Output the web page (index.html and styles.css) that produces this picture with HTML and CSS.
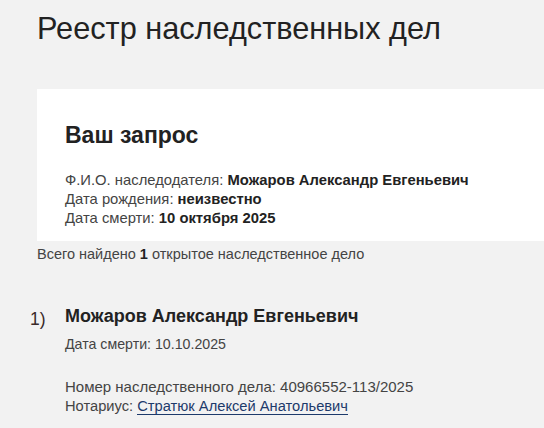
FILE: index.html
```html
<!DOCTYPE html>
<html lang="ru">
<head>
<meta charset="utf-8">
<link rel="stylesheet" href="styles.css">
</head>
<body>
<div class="page">
  <h1 class="title">Реестр наследственных дел</h1>
  <section class="request">
    <h2 class="request-title">Ваш запрос</h2>
    <div class="request-lines">
      <div>Ф.И.О. наследодателя: <b>Можаров Александр Евгеньевич</b></div>
      <div>Дата рождения: <b>неизвестно</b></div>
      <div>Дата смерти: <b>10 октября 2025</b></div>
    </div>
  </section>
  <div class="found">Всего найдено <b>1</b> открытое наследственное дело</div>
  <ol class="results">
    <li class="result">
      <span class="num">1)</span>
      <div class="result-body">
        <div class="result-name">Можаров Александр Евгеньевич</div>
        <div class="result-date">Дата смерти: 10.10.2025</div>
        <div class="result-case">Номер наследственного дела: 40966552-113/2025</div>
        <div class="result-notary">Нотариус: <a class="link" href="#">Стратюк Алексей Анатольевич</a></div>
      </div>
    </li>
  </ol>
</div>
</body>
</html>
```
FILE: styles.css
```css
html, body {
  margin: 0;
  padding: 0;
  background: #f2f2f2;
}
body {
  font-family: "Liberation Sans", Arial, sans-serif;
  color: #444;
  overflow: hidden;
}
.page {
  padding: 11px 0 0 37px;
}
.title {
  margin: 0;
  font-size: 30.7px;
  font-weight: normal;
  color: #222;
  line-height: 36px;
}
.request {
  margin-top: 42px;
  background: #fff;
  padding: 32px 0 13px 28px;
}
.request-title {
  margin: 0 0 22px 0;
  font-size: 23px;
  font-weight: bold;
  color: #222;
  line-height: 28px;
}
.request-lines {
  font-size: 14.8px;
  line-height: 19px;
}
.request-lines b {
  color: #222;
}
.found {
  margin-top: 4px;
  font-size: 14.5px;
  line-height: 18px;
  color: #444;
}
.found b { color: #222; }
.results {
  list-style: none;
  margin: 41px 0 0 -7px;
  padding: 0;
}
.result {
  display: flex;
}
.num {
  width: 35px;
  font-size: 17.5px;
  line-height: 24px;
  color: #3a2a2a;
  padding-top: 3px;
}
.result-name {
  font-size: 18px;
  font-weight: bold;
  color: #222;
  line-height: 24px;
}
.result-date {
  margin-top: 7px;
  font-size: 14.2px;
  line-height: 19px;
}
.result-case {
  margin-top: 23px;
  font-size: 15px;
  line-height: 19px;
}
.result-notary {
  font-size: 14.7px;
  line-height: 21px;
}
.link {
  color: #1d3a6b;
  text-decoration: none;
  border-bottom: 1px solid #1d3a6b;
}
```
